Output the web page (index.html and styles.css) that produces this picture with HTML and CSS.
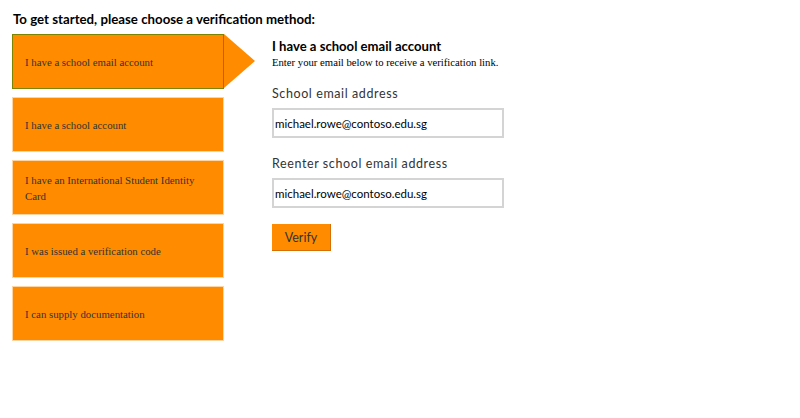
FILE: index.html
```html
<!DOCTYPE html>
<html lang="en">
<head>
    <meta charset="UTF-8">
    <meta name="viewport" content="width=device-width, initial-scale=1.0">
    <title>Verification</title>
    <link rel="stylesheet" href="styles.css">
</head>
<body>
    <h1 class="intro">To get started, please choose a verification method:</h1>
    <div class="verify">
        <div class="methods">
            <div class="method selected">I have a school email account</div>
            <div class="method">I have a school account</div>
            <div class="method">I have an International Student Identity Card</div>
            <div class="method">I was issued a verification code</div>
            <div class="method">I can supply documentation</div>
        </div>
        <div class="panel">
            <h2 class="panel-title">I have a school email account</h2>
            <p class="panel-note">Enter your email below to receive a verification link.</p>
            <label class="field-label" for="email">School email address</label>
            <input class="field" id="email" type="text" value="michael.rowe@contoso.edu.sg">
            <label class="field-label" for="email2">Reenter school email address</label>
            <input class="field" id="email2" type="text" value="michael.rowe@contoso.edu.sg">
            <button class="verify-btn">Verify</button>
        </div>
    </div>
</body>
</html>
```

FILE: styles.css
```css
body {
    margin: 0;
    padding: 10px 12px;
    font-family: Lato, "Noto Sans", sans-serif;
    color: #000;
    background: #fff;
}
.intro {
    font-size: 13.25px;
    font-weight: bold;
    margin: 0 0 6px 1px;
    line-height: 18px;
}
.verify {display: flex;gap: 48px;}
.methods {display: flex;flex-direction: column;gap: 8px;width: 212px;}
.method {
    position: relative;
    height: 53px;
    display: flex;
    align-items: center;
    padding: 0 12px;
    background: #ff8c00;
    border: 1px solid #ffd4a3;
    font-family: "Liberation Serif", serif;
    font-size: 10.8px;
    line-height: 16px;
    color: #333;
}
.method.selected { border-color: #7d8500; }
.method.selected::after {
    content: "";
    position: absolute;
    left: 100%;
    top: -1px;
    margin-left: 1px;
    border-left: 31px solid #ff8c00;
    border-top: 27.5px solid transparent;
    border-bottom: 27.5px solid transparent;
}
.panel {display: flex;flex-direction: column;align-items: flex-start;padding-top: 4px;}
.panel-title { font-size: 13.1px; font-weight: bold; margin: 0; line-height: 16px; }
.panel-note { font-family: "Liberation Serif", serif; font-size: 10.7px; margin: 1px 0 0; line-height: 14px; }
.field-label { font-size: 12.5px; letter-spacing: 0.6px; margin-top: 17px; line-height: 16px; color: #333; }
.field {
    margin-top: 6px;
    width: 232px;
    height: 30px;
    box-sizing: border-box;
    border: 2px solid #d4d4d4;
    padding: 0 1px;
    font-family: Lato, "Noto Sans", sans-serif;
    font-size: 11.5px;
    color: #000;
}
.field + .field-label { margin-top: 18px; }
.verify-btn {
    margin-top: 16px;
    width: 59px;
    height: 27px;
    background: #ff8c00;
    border: none;
    border-right: 1px solid #d76f00;
    border-bottom: 1px solid #d76f00;
    font-family: Lato, "Noto Sans", sans-serif;
    font-size: 12.5px;
    color: #333;
    padding: 0;
}
```
